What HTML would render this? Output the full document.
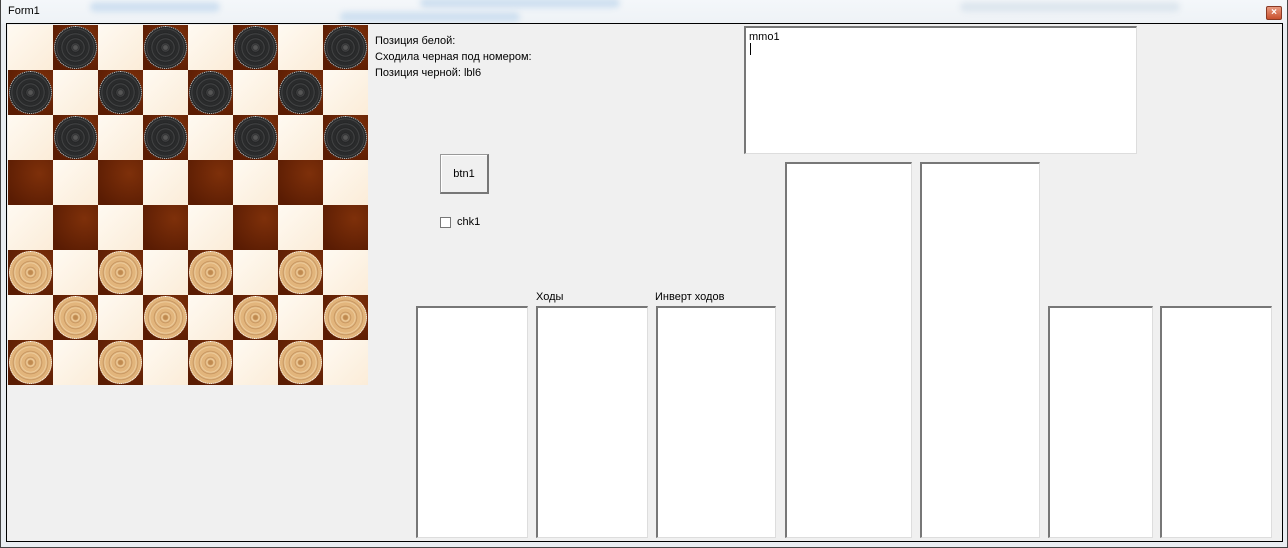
<!DOCTYPE html>
<html><head><meta charset="utf-8"><style>
*{margin:0;padding:0;box-sizing:border-box}
body{width:1288px;height:548px;background:#e9edf1;position:relative;overflow:hidden;font-family:"Liberation Sans",sans-serif;font-size:11px;color:#000}
.title{position:absolute;left:0;top:0;width:1288px;height:24px;background:linear-gradient(#f4f7fa,#eef2f6)}
.blur{position:absolute;height:10px;border-radius:5px;background:#cfe0f0;filter:blur(3px)}
.title span{position:absolute;left:8px;top:5px;font-size:11px;color:#000}
.close{position:absolute;left:1266px;top:6px;width:16px;height:14px;background:linear-gradient(#e89a80,#c8502e);border:1px solid #8a3a25;border-radius:2px;color:#fff;font-size:10px;font-weight:bold;text-align:center;line-height:12px}
.frame{position:absolute;left:6px;top:23px;width:1277px;height:519px;border:1px solid #000;background:#f0f0f0}
.outer{position:absolute;left:0;top:0;width:1288px;height:548px;border:1px solid #444;border-top:none}
.board{position:absolute;left:8px;top:25px;width:360px;height:360px}
.sq{position:absolute;width:45px;height:45px}
.l{background:linear-gradient(135deg,#fffaf2,#fbecd8)}
.d{background:radial-gradient(circle at 70% 30%,#7e300a,#5a1c03 85%)}
.p{position:absolute;left:1px;top:1px;width:43px;height:43px;border-radius:50%}
.b{background:radial-gradient(circle,#555 0 2px,transparent 3px),repeating-radial-gradient(circle,#2a2b2c 0 3px,#48494a 3.5px,#1c1d1e 5px);border:1px dotted #ccc}
.w{background:radial-gradient(circle,#c08a50 0 2px,transparent 3px),repeating-radial-gradient(circle,#e2b57c 0 3px,#f3d3a3 3.5px,#c4915a 5.5px,#e2b57c 6px);border:1px dotted #fff}
.lbl{position:absolute;font-size:11px;white-space:nowrap}
.box{position:absolute;background:#fff;border:1px solid #fff;border-top:2px solid #777;border-left:2px solid #777;border-right:1px solid #ddd;border-bottom:1px solid #ddd}
.btn{position:absolute;left:440px;top:154px;width:49px;height:40px;background:#f0f0f0;border:1px solid #999;border-right:2px solid #777;border-bottom:2px solid #777;box-shadow:inset 1px 1px #fff;text-align:center;line-height:38px}
.chk{position:absolute;left:440px;top:217px;width:11px;height:11px;border:1px solid #777;background:#fff}
</style></head><body>
<div class="title">
<div class="blur" style="left:90px;top:2px;width:130px"></div>
<div class="blur" style="left:420px;top:-2px;width:200px"></div>
<div class="blur" style="left:340px;top:12px;width:180px"></div>
<div class="blur" style="left:960px;top:2px;width:220px;background:#dde6ee"></div>
<span>Form1</span>
</div>
<div class="close">×</div>
<div class="frame"></div>
<div class="outer"></div>
<div class="board" id="bd"></div>
<div class="lbl" style="left:375px;top:35px">Позиция белой:</div>
<div class="lbl" style="left:375px;top:51px">Сходила черная под номером:</div>
<div class="lbl" style="left:375px;top:67px">Позиция черной: lbl6</div>
<div class="btn">btn1</div>
<div class="chk"></div>
<div class="lbl" style="left:457px;top:216px">chk1</div>
<div class="box" style="left:744px;top:26px;width:393px;height:128px"><div style="position:absolute;left:3px;top:3px;font-size:11px">mmo1</div><div style="position:absolute;left:4px;top:15px;width:1px;height:12px;background:#000"></div></div>
<div class="lbl" style="left:536px;top:291px">Ходы</div>
<div class="lbl" style="left:655px;top:291px">Инверт ходов</div>
<div class="box" style="left:416px;top:306px;width:112px;height:232px"></div>
<div class="box" style="left:536px;top:306px;width:112px;height:232px"></div>
<div class="box" style="left:656px;top:306px;width:120px;height:232px"></div>
<div class="box" style="left:785px;top:162px;width:127px;height:376px"></div>
<div class="box" style="left:920px;top:162px;width:120px;height:376px"></div>
<div class="box" style="left:1048px;top:306px;width:105px;height:232px"></div>
<div class="box" style="left:1160px;top:306px;width:112px;height:232px"></div>
<script>
var h='';
for(var r=0;r<8;r++)for(var c=0;c<8;c++){var d=(r+c)%2==1;h+='<div class="sq '+(d?'d':'l')+'" style="left:'+c*45+'px;top:'+r*45+'px">';
if(d&&r<3)h+='<div class="p b"></div>';if(d&&r>4)h+='<div class="p w"></div>';h+='</div>';}
document.getElementById('bd').innerHTML=h;
</script>
</body></html>
